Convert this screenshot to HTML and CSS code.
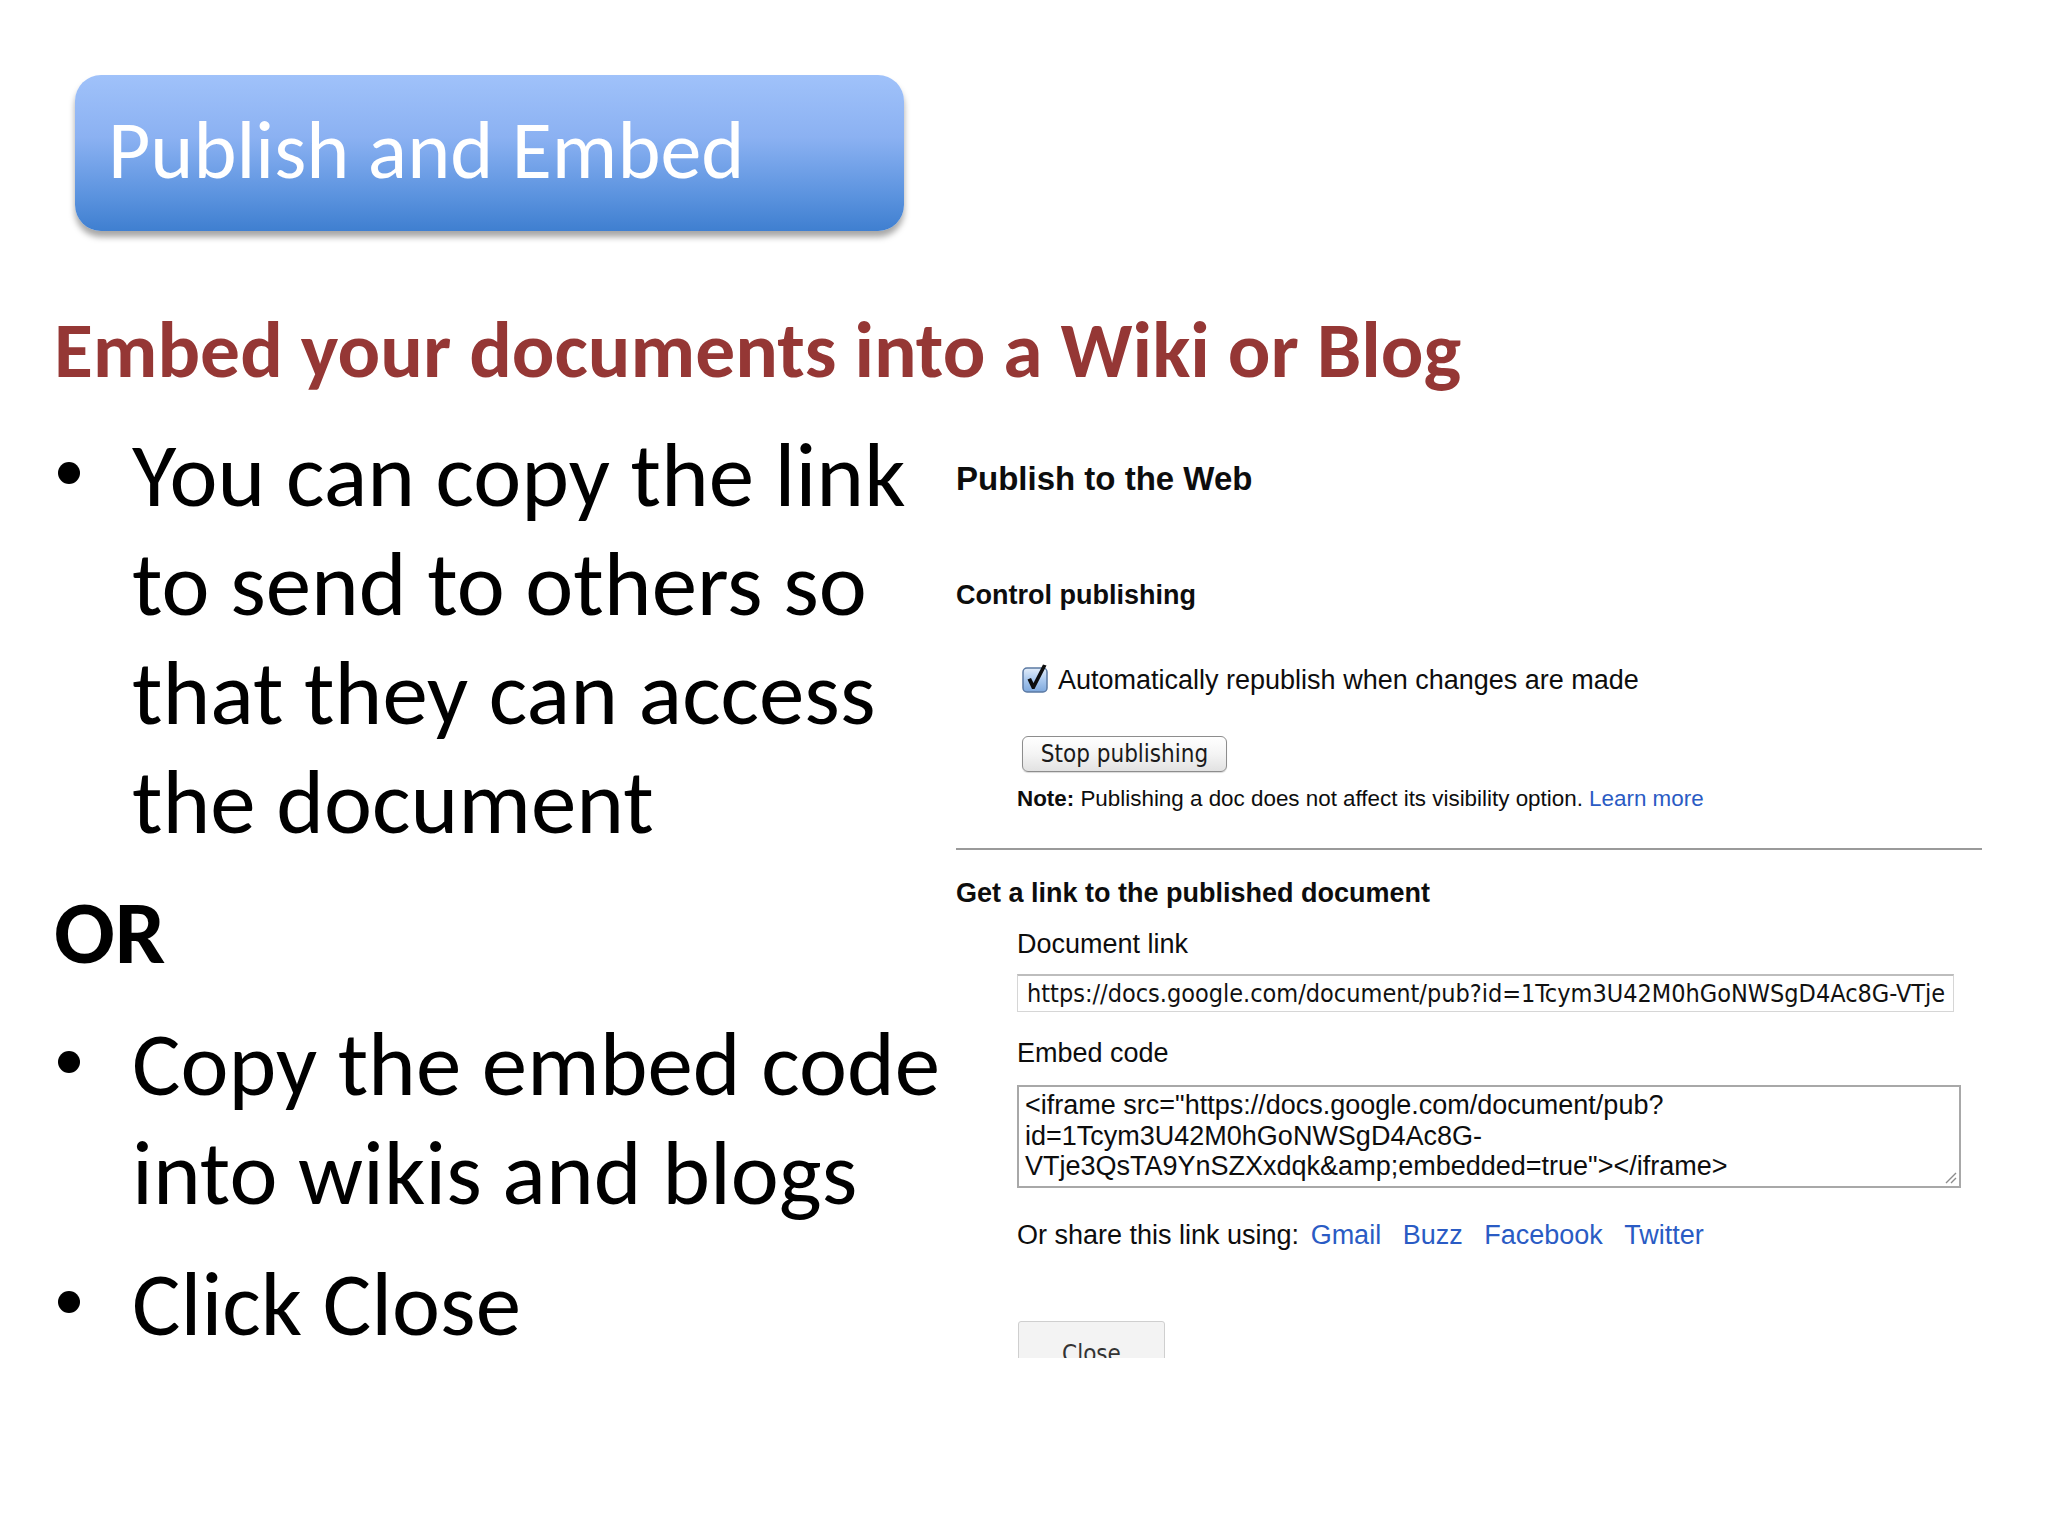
FILE: index.html
```html
<!DOCTYPE html>
<html lang="en">
<head>
  <meta charset="UTF-8">
  <meta name="viewport" content="width=device-width, initial-scale=1.0">
  <title>Publish and Embed</title>

  <link rel="stylesheet" href="styles.css">
</head>

<body>
  <div class="slide">
    <div class="title-bar">
      <h1>Publish and Embed</h1>
    </div>
    <h2 class="subtitle">Embed your documents into a Wiki or Blog</h2>

    <div class="content">
      <div class="points">
        <ul class="bullets">
          <li><span class="dot"></span><span>You can copy the link to send to others so that they can access the document</span></li>
        </ul>
        <p class="or">OR</p>
        <ul class="bullets">
          <li><span class="dot"></span><span>Copy the embed code into wikis and blogs</span></li>
          <li><span class="dot"></span><span>Click Close</span></li>
        </ul>
      </div>

      <div class="dialog">
        <h3 class="dlg-title">Publish to the Web</h3>
        <h4 class="dlg-section first">Control publishing</h4>

        <label class="check-row">
          <svg class="check" width="28" height="30" viewBox="0 0 28 30">
            <defs>
              <linearGradient id="cb" x1="0" y1="0" x2="0" y2="1">
                <stop offset="0" stop-color="#e4eefa"/>
                <stop offset="0.5" stop-color="#a9c8ee"/>
                <stop offset="1" stop-color="#7ea8dc"/>
              </linearGradient>
            </defs>
            <rect x="1" y="5" width="24" height="24" rx="4" fill="url(#cb)" stroke="#5b79a3" stroke-width="1.5"/>
            <path d="M5.5 16.5 L9 15 L11.5 20 L21 1.5 L24.5 2.5 L12.5 26 L10 26 Z" fill="#0d0d0d"/>
          </svg>
          <span>Automatically republish when changes are made</span>
        </label>

        <div class="btn stop">Stop publishing</div>
        <p class="note"><b>Note:</b> Publishing a doc does not affect its visibility option. <a href="#">Learn more</a></p>

        <div class="rule"></div>

        <h4 class="dlg-section">Get a link to the published document</h4>
        <p class="field-label">Document link</p>
        <div class="link-input">https://docs.google.com/document/pub?id=1Tcym3U42M0hGoNWSgD4Ac8G-VTje</div>

        <p class="field-label embed-label">Embed code</p>
        <div class="embed-box">
          &lt;iframe src="https://docs.google.com/document/pub?<br>id=1Tcym3U42M0hGoNWSgD4Ac8G-<br>VTje3QsTA9YnSZXxdqk&amp;amp;embedded=true"&gt;&lt;/iframe&gt;
          <svg class="grip" width="14" height="14" viewBox="0 0 14 14">
            <path d="M13 3 L3 13 M13 8 L8 13" stroke="#8c8c8c" stroke-width="1.4"/>
          </svg>
        </div>

        <p class="share">Or share this link using: <a href="#">Gmail</a> <a href="#">Buzz</a> <a href="#">Facebook</a> <a href="#">Twitter</a></p>

        <div class="btn close">Close</div>
      </div>
    </div>
  </div>
</body>
</html>
```

FILE: styles.css
```css
body {
  margin: 0;
  background-color: #fff;
}

.slide {
  width: 2048px;
  height: 1536px;
  overflow: hidden;
  font-family: Carlito, Calibri, "Open Sans", sans-serif;
  color: #000;
}

.title-bar {
  margin: 75px 0 0 75px;
  width: 829px;
  height: 156px;
  box-sizing: border-box;
  padding: 34px 0 0 33px;
  border-radius: 26px;
  background: linear-gradient(#a0c2fa, #8bb1f2 40%, #5e95e0 75%, #3f7fd0);
  box-shadow: 0 6px 6px rgba(0, 0, 0, .35);
}

.title-bar h1 {
  margin: 0;
  font-size: 82px;
  line-height: 82px;
  font-weight: 400;
  color: #fff;
}

.subtitle {
  margin: 79px 0 0 54px;
  font-size: 79.5px;
  line-height: 80px;
  font-weight: 700;
  color: #953735;
}

.content {
  display: grid;
  grid-template-columns: 956px 1027px;
  margin-top: 30px;
}

/* left column: slide bullets */
.points {
  font-size: 91px;
  line-height: 109px;
}

.bullets {
  list-style: none;
  margin: 0;
  padding: 0 0 0 58px;
}

.bullets li {
  display: flex;
  align-items: flex-start;
}

.bullets li + li {
  margin-top: 22px;
}

.dot {
  flex: none;
  width: 22px;
  height: 22px;
  margin: 42px 52px 0 0;
  border-radius: 50%;
  background-color: #000;
}

.or {
  margin: 22px 0 22px 54px;
  font-size: 90px;
  font-weight: 700;
}

/* right column: the docs dialog */
.dialog {
  height: 938px;
  overflow: hidden;
  font-family: "Liberation Sans", Arial, sans-serif;
  color: #0d0d0d;
}

.dialog a {
  color: #2a5bc4;
  text-decoration: none;
}

.dlg-title {
  margin: 39px 0 0;
  font-size: 33px;
  line-height: 40px;
}

.dlg-section {
  margin: 28px 0 0;
  font-size: 27px;
  line-height: 31px;
}

.dlg-section.first {
  margin-top: 81px;
}

.check-row {
  display: flex;
  align-items: center;
  gap: 8px;
  margin: 53px 0 0 66px;
  font-size: 27px;
  line-height: 32px;
}

.check {
  display: block;
  margin-top: -4px;
}

.btn {
  box-sizing: border-box;
  font-family: "DejaVu Sans Condensed", "DejaVu Sans", sans-serif;
  text-align: center;
}

.stop {
  margin: 40px 0 0 66px;
  width: 205px;
  height: 36px;
  font-size: 24px;
  line-height: 34px;
  color: #1a1a1a;
  border: 1px solid #8d8d8d;
  border-radius: 6px;
  background: linear-gradient(#ffffff, #f4f4f4 50%, #e2e2e2);
  box-shadow: 0 1px 1px rgba(0, 0, 0, .15);
}

.note {
  margin: 14px 0 0 61px;
  font-size: 22.4px;
  line-height: 25px;
}

.rule {
  margin-top: 37px;
  height: 2px;
  width: 1026px;
  background-color: #9a9a9a;
}

.field-label {
  margin: 19px 0 0 61px;
  font-size: 27px;
  line-height: 32px;
}

.link-input {
  box-sizing: border-box;
  margin: 14px 0 0 61px;
  width: 937px;
  height: 38px;
  padding-left: 9px;
  font-family: "DejaVu Sans Condensed", "DejaVu Sans", sans-serif;
  font-size: 25px;
  line-height: 36px;
  white-space: nowrap;
  overflow: hidden;
  color: #111;
  border: 1px solid #d6d6d6;
  border-top: 2px solid #bdbdbd;
  background-color: #fff;
}

.embed-label {
  margin-top: 25px;
}

.embed-box {
  position: relative;
  box-sizing: border-box;
  margin: 16px 0 0 61px;
  width: 944px;
  height: 103px;
  padding: 3px 0 0 6px;
  font-size: 27px;
  line-height: 30.5px;
  white-space: nowrap;
  border: 2px solid #a8a8a8;
  background-color: #fff;
}

.grip {
  position: absolute;
  right: 2px;
  bottom: 2px;
}

.share {
  margin: 31px 0 0 61px;
  font-size: 27px;
  line-height: 32px;
}

.share a {
  margin-left: 14px;
}

.share a:first-child {
  margin-left: 4px;
}

.close {
  margin: 70px 0 0 62px;
  width: 147px;
  height: 50px;
  padding-top: 15px;
  font-size: 24px;
  line-height: 34px;
  color: #333;
  border: 1px solid #cfcfcf;
  border-radius: 3px;
  background-color: #f3f3f3;
}
```
